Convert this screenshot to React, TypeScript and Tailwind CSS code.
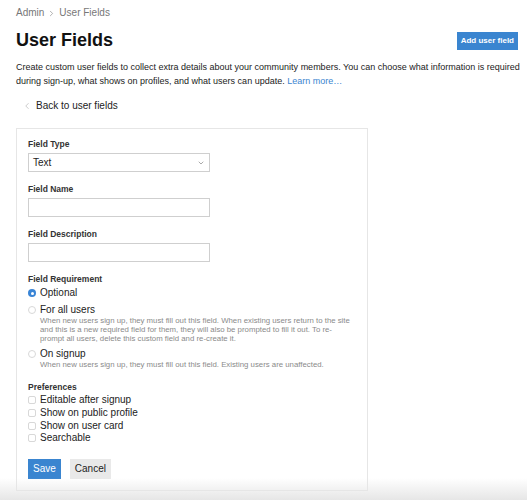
import { ChevronDown, ChevronLeft, ChevronRight } from "lucide-react";

const font = { fontFamily: '"Liberation Sans", Arial, sans-serif' };

function Label({ children, mb = "mb-[4px]" }: { children: React.ReactNode; mb?: string }) {
  return <p className={`text-[8.5px] font-bold text-[#333] leading-[10px] ${mb}`}>{children}</p>;
}

function Radio({ checked, title, desc }: { checked?: boolean; title: string; desc?: React.ReactNode }) {
  return (
    <div className="flex gap-[4px]">
      <span
        className={
          checked
            ? "mt-[2px] w-[8px] h-[8px] rounded-full bg-[#3a85d6] flex items-center justify-center shrink-0"
            : "mt-[2px] w-[8px] h-[8px] rounded-full border border-[#d8d8d8] bg-white shrink-0"
        }
      >
        {checked && <span className="w-[3px] h-[3px] rounded-full bg-white" />}
      </span>
      <div>
        <p className="text-[10px] leading-[12px] text-[#222]">{title}</p>
        {desc && <p className="text-[7.8px] leading-[9px] text-[#8a8a8a]">{desc}</p>}
      </div>
    </div>
  );
}

function Check({ label }: { label: string }) {
  return (
    <div className="flex items-center gap-[4px] h-[12.7px]">
      <span className="w-[8px] h-[8px] rounded-[2px] border border-[#d8d8d8] bg-white shrink-0" />
      <span className="text-[10px] leading-[12px] text-[#222]">{label}</span>
    </div>
  );
}

export default function App() {
  return (
    <div className="relative h-[500px] overflow-hidden bg-white pl-[16px] pr-[9px]" style={font}>
      <div className="pt-[7px] flex items-center gap-[3px] text-[10px] leading-[12px] text-[#777]">
        <span>Admin</span>
        <ChevronRight size={9} strokeWidth={1.5} />
        <span>User Fields</span>
      </div>

      <div className="mt-[10px] flex justify-between items-start">
        <h1 className="text-[18px] font-bold leading-[22px] text-[#111]">User Fields</h1>
        <button className="mt-[3px] h-[18px] px-[4px] bg-[#3a85d0] text-white text-[8px] font-bold">
          Add user field
        </button>
      </div>

      <p className="mt-[9px] text-[9px] leading-[14px] text-[#222] whitespace-nowrap">
        Create custom user fields to collect extra details about your community members. You can choose what information is required
        <br />
        during sign-up, what shows on profiles, and what users can update.{" "}
        <span className="text-[#3a85d0]">Learn more…</span>
      </p>

      <div className="mt-[12px] pl-[6px] flex items-center gap-[4px] text-[10px] leading-[12px] text-[#222]">
        <ChevronLeft size={10} strokeWidth={1.2} className="text-[#999]" />
        <span>Back to user fields</span>
      </div>

      <div className="mt-[16px] w-[352px] border border-[#e6e6e6] px-[11px] pt-[10px] pb-[11px]">
        <Label>Field Type</Label>
        <div className="w-[182px] h-[19px] border border-[#cfcfcf] flex items-center justify-between px-[4px]">
          <span className="text-[10px] text-[#222]">Text</span>
          <ChevronDown size={8} strokeWidth={1.5} className="text-[#555]" />
        </div>

        <div className="mt-[12px]">
          <Label>Field Name</Label>
          <div className="w-[182px] h-[19px] border border-[#cfcfcf]" />
        </div>

        <div className="mt-[12px]">
          <Label>Field Description</Label>
          <div className="w-[182px] h-[19px] border border-[#cfcfcf]" />
        </div>

        <div className="mt-[12px]">
          <Label mb="mb-[3px]">Field Requirement</Label>
          <div className="flex flex-col gap-[5px]">
            <Radio checked title="Optional" />
            <Radio
              title="For all users"
              desc={
                <>
                  When new users sign up, they must fill out this field. When existing users return to the site
                  <br />
                  and this is a new required field for them, they will also be prompted to fill it out. To re-
                  <br />
                  prompt all users, delete this custom field and re-create it.
                </>
              }
            />
            <Radio
              title="On signup"
              desc="When new users sign up, they must fill out this field. Existing users are unaffected."
            />
          </div>
        </div>

        <div className="mt-[13px]">
          <Label mb="mb-[2px]">Preferences</Label>
          <Check label="Editable after signup" />
          <Check label="Show on public profile" />
          <Check label="Show on user card" />
          <Check label="Searchable" />
        </div>

        <div className="mt-[14px] flex gap-[9px]">
          <button className="h-[20px] px-[5px] bg-[#3a85d0] text-white text-[10px]">Save</button>
          <button className="h-[20px] px-[5px] bg-[#e9e9e9] text-[#222] text-[10px]">Cancel</button>
        </div>
      </div>

      <div className="pointer-events-none absolute left-0 right-0 bottom-0 h-[22px] bg-gradient-to-b from-white/0 to-[#e6e6e6]" />
    </div>
  );
}
